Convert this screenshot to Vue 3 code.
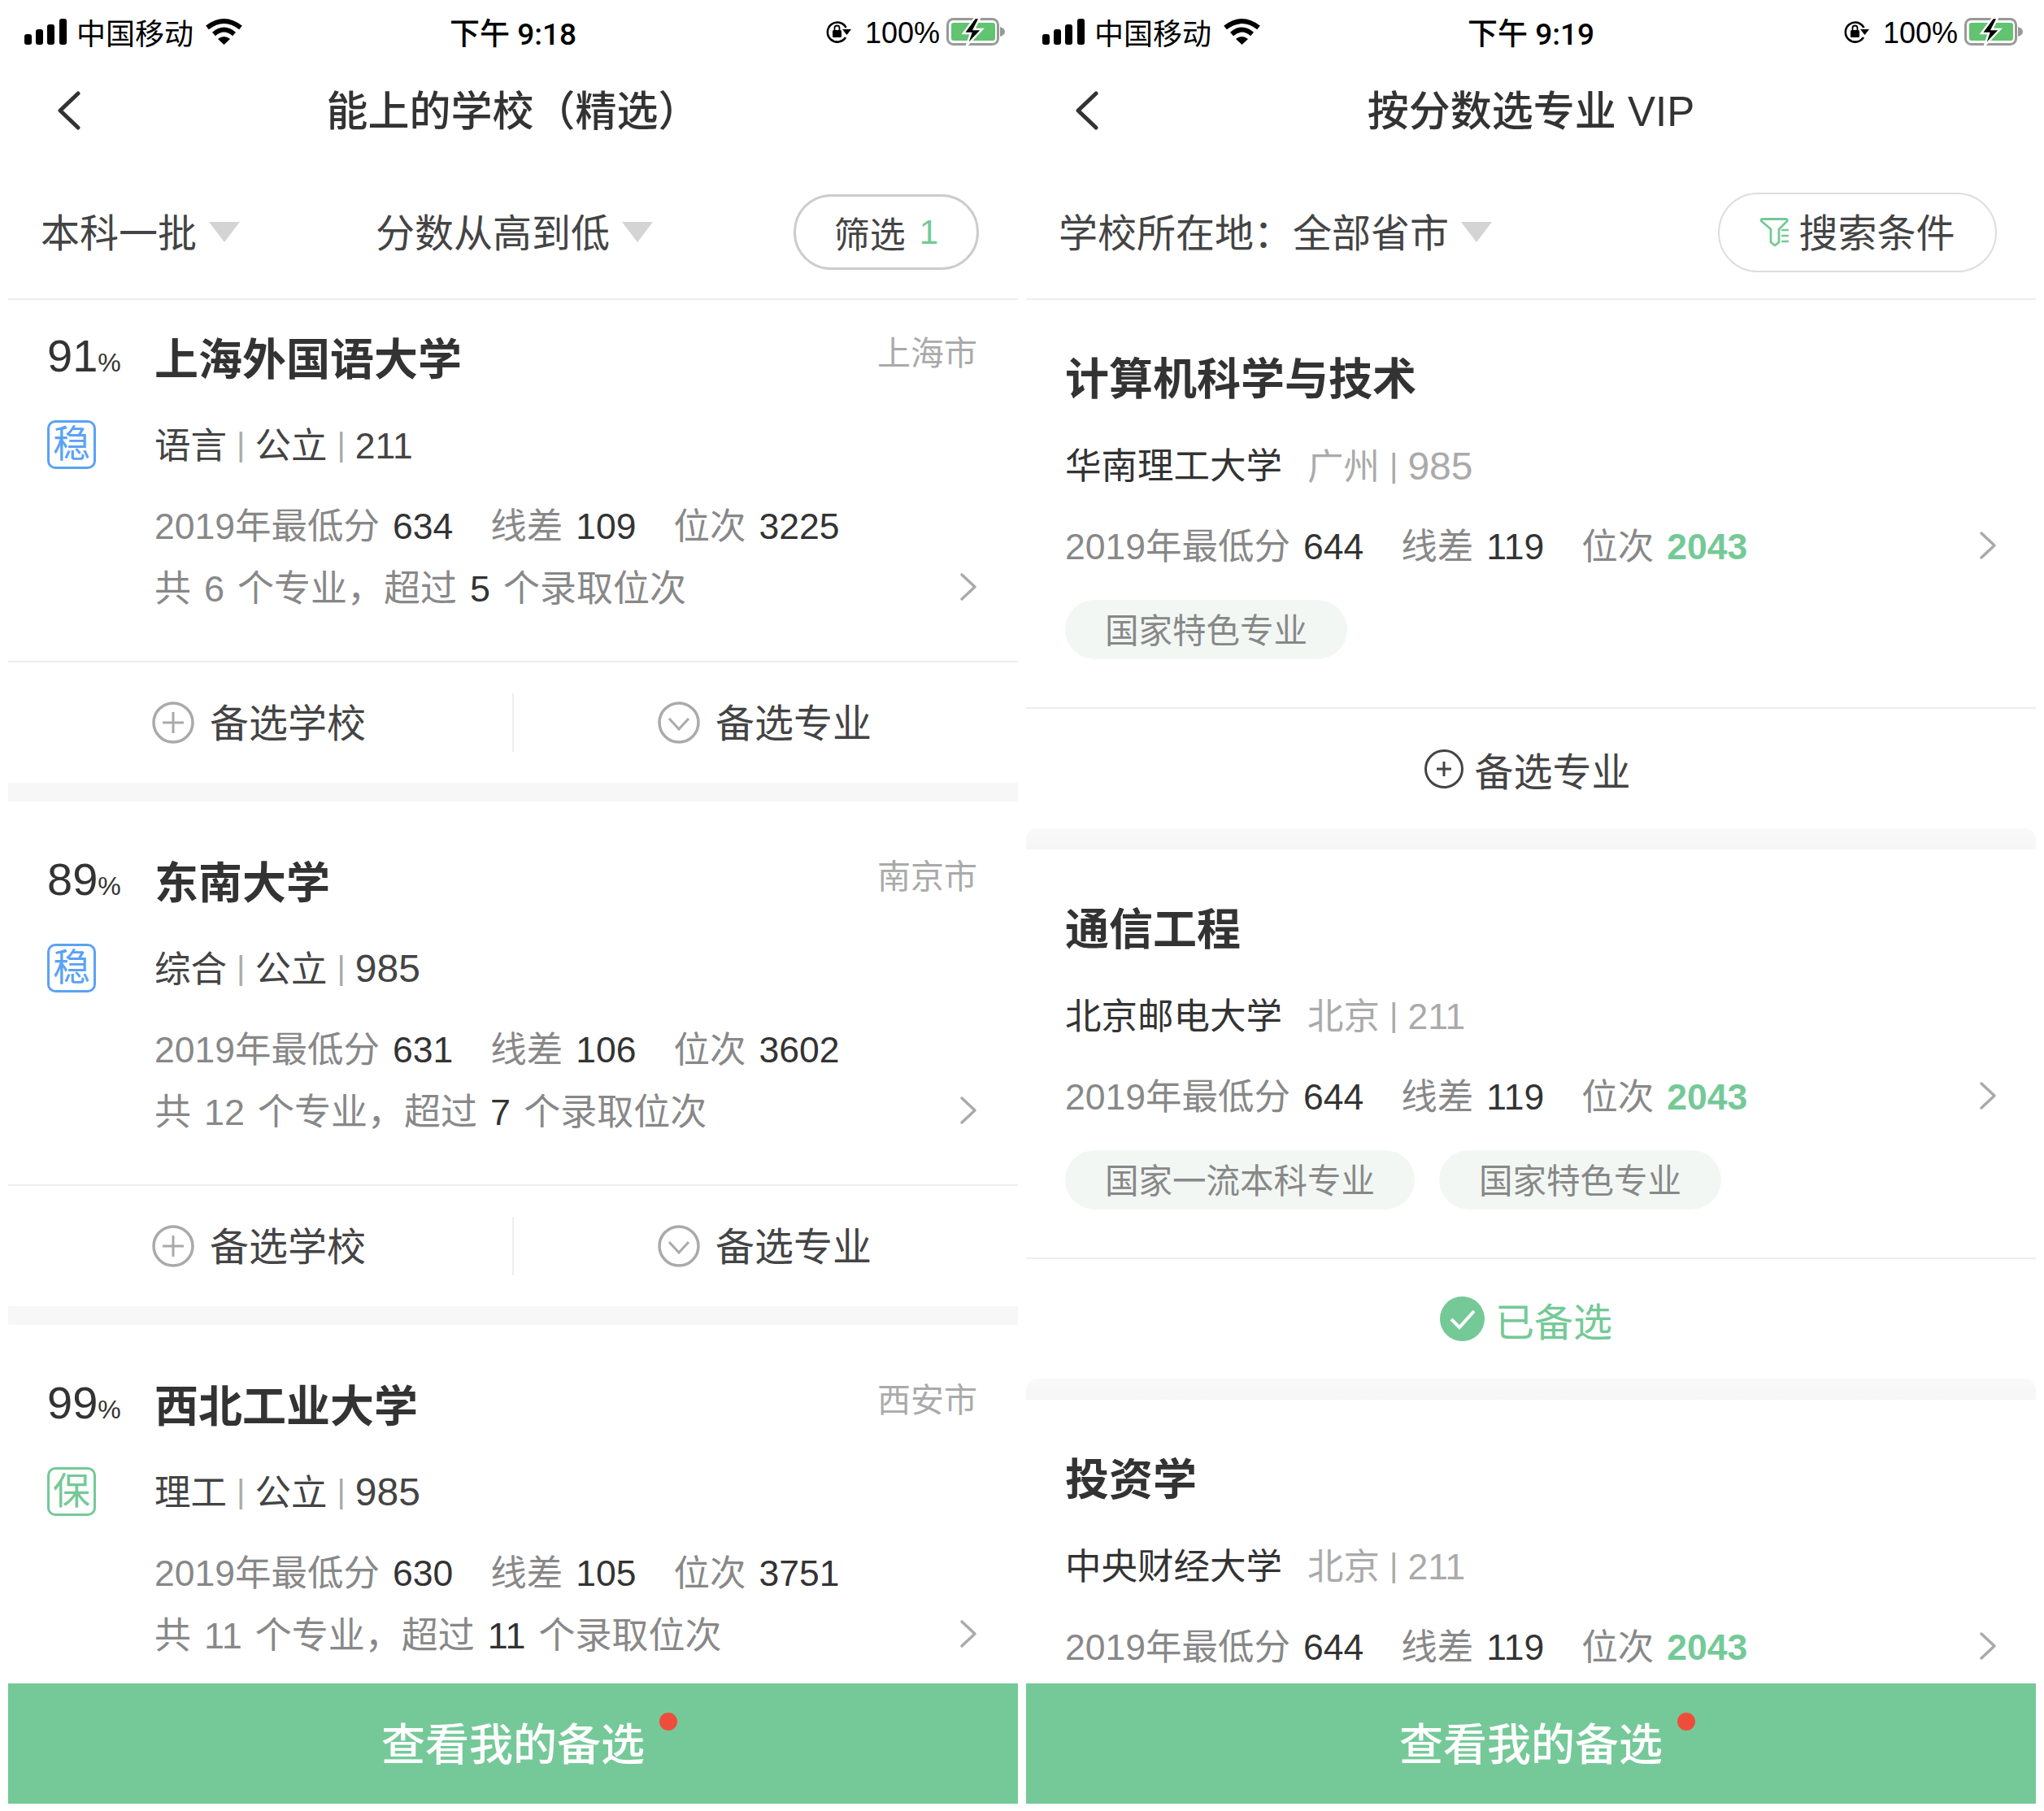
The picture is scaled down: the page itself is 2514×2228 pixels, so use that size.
<script setup>
const schools = [
  { pct: 91, name: '上海外国语大学', city: '上海市', risk: '稳', tone: 'blue', meta: ['语言', '公立', '211'], score: 634, diff: 109, rank: 3225, majors: 6, over: 5, cut: false },
  { pct: 89, name: '东南大学', city: '南京市', risk: '稳', tone: 'blue', meta: ['综合', '公立', '985'], score: 631, diff: 106, rank: 3602, majors: 12, over: 7, cut: false },
  { pct: 99, name: '西北工业大学', city: '西安市', risk: '保', tone: 'green', meta: ['理工', '公立', '985'], score: 630, diff: 105, rank: 3751, majors: 11, over: 11, cut: true }
]
const majors = [
  { name: '计算机科学与技术', school: '华南理工大学', city: '广州', level: '985', tags: ['国家特色专业'], picked: false, cut: false },
  { name: '通信工程', school: '北京邮电大学', city: '北京', level: '211', tags: ['国家一流本科专业', '国家特色专业'], picked: true, cut: false },
  { name: '投资学', school: '中央财经大学', city: '北京', level: '211', tags: [], picked: false, cut: true }
]
const phones = [{ time: '下午 9:18' }, { time: '下午 9:19' }]
</script>

<template>
  <div class="page">
    <section v-for="(phone, idx) in phones" :key="idx" class="phone">
      <header class="status">
        <div class="st-left">
          <svg class="signal" width="52" height="32" viewBox="0 0 52 32">
            <rect x="0" y="19" width="9" height="13" rx="3" />
            <rect x="14" y="13" width="9" height="19" rx="3" />
            <rect x="28" y="7" width="9" height="25" rx="3" />
            <rect x="43" y="0" width="9" height="32" rx="3" />
          </svg>
          <span class="carrier">中国移动</span>
          <svg class="wifi" width="45" height="33" viewBox="0 0 45 33">
            <path d="M2 12 Q22.5 -4 43 12" fill="none" stroke="#000" stroke-width="6" />
            <path d="M10 20 Q22.5 9 35 20" fill="none" stroke="#000" stroke-width="6" />
            <path d="M15 26 Q22.5 20 30 26 L22.5 33 Z" fill="#000" />
          </svg>
        </div>
        <div class="st-time">{{ phone.time }}</div>
        <div class="st-right">
          <svg width="32" height="28" viewBox="0 0 32 28">
            <path d="M25 21 A12 12 0 1 1 25.5 9" fill="none" stroke="#000" stroke-width="2.6" />
            <path d="M21 11 H32 L26.5 18 Z" fill="#000" />
            <rect x="9" y="12" width="11" height="9" rx="1.5" fill="#000" />
            <path d="M11.5 12 V9.5 A3 3 0 0 1 17.5 9.5 V12" fill="none" stroke="#000" stroke-width="1.8" />
          </svg>
          <span class="pct-st">100%</span>
          <svg width="74" height="34" viewBox="0 0 74 34">
            <rect x="1.5" y="1.5" width="62" height="31" rx="7" fill="none" stroke="#999" stroke-width="3" />
            <rect x="6" y="6" width="54" height="22" rx="3" fill="#62c370" />
            <path d="M66 11 Q72 13 72 17 Q72 21 66 23 Z" fill="#999" />
            <path d="M35 0 L21 19 H30 L25 34 L44 14 H34 L41 0 Z" fill="#000" stroke="#fff" stroke-width="2.5" />
          </svg>
        </div>
      </header>

      <nav class="nav">
        <svg class="back" width="32" height="48" viewBox="0 0 32 48">
          <path d="M28 3 L6 24 L28 45" fill="none" stroke="#333" stroke-width="5" stroke-linecap="round" stroke-linejoin="round" />
        </svg>
        <h1 class="nav-title">{{ idx === 0 ? '能上的学校（精选）' : '按分数选专业 VIP' }}</h1>
      </nav>

      <div v-if="idx === 0" class="filter">
        <div class="f-item f-first"><span class="lift">本科一批</span><i class="tri"></i></div>
        <div class="f-item"><span class="lift">分数从高到低</span><i class="tri"></i></div>
        <div class="pill pill-a">筛选<b>1</b></div>
      </div>
      <div v-else class="filter">
        <div class="f-item"><span class="lift">学校所在地：全部省市</span><i class="tri"></i></div>
        <div class="pill pill-b">
          <svg width="38" height="37" viewBox="0 0 38 37">
            <path d="M3 2.5 H33 Q35 3 34 5 L24 15 V31 L19 35 L14 31 V15 L2.5 5 Q1.5 3 3 2.5 Z" fill="none" stroke="#74c997" stroke-width="2.8" stroke-linejoin="round" />
            <path d="M27 16 H36 M27 23 H36 M27 30 H36" stroke="#74c997" stroke-width="2.6" />
          </svg>
          <span class="lift">搜索条件</span>
        </div>
      </div>

      <div v-if="idx === 0" class="list">
        <article v-for="s in schools" :key="s.name" class="school">
          <div class="s-body">
            <div class="s-head">
              <span class="percent">{{ s.pct }}<small>%</small></span>
              <span class="s-name">{{ s.name }}</span>
              <span class="s-city">{{ s.city }}</span>
            </div>
            <div class="s-meta">
              <span class="risk" :class="s.tone">{{ s.risk }}</span>
              <span class="meta-text">
                <template v-for="(m, i) in s.meta" :key="m"><i v-if="i" class="bar">|</i><span :class="{ wide: m === '985' }">{{ m }}</span></template>
              </span>
            </div>
            <div class="s-stats">
              <span>2019年最低分<em>{{ s.score }}</em></span>
              <span>线差<em>{{ s.diff }}</em></span>
              <span>位次<em>{{ s.rank }}</em></span>
            </div>
            <div class="s-sum">
              <span>共<i class="num">{{ s.majors }}</i>个专业，超过<em class="num">{{ s.over }}</em>个录取位次</span>
              <svg class="arrow" width="22" height="36" viewBox="0 0 22 36">
                <path d="M3 3 L19 18 L3 33" fill="none" stroke="#aaa" stroke-width="3.5" stroke-linecap="round" stroke-linejoin="round" />
              </svg>
            </div>
          </div>
          <div v-if="!s.cut" class="s-actions">
            <div class="act">
              <svg width="52" height="52" viewBox="0 0 52 52">
                <circle cx="26" cy="26" r="24" fill="none" stroke="#aaa" stroke-width="3.5" />
                <path d="M26 13 V39 M13 26 H39" stroke="#aaa" stroke-width="3" />
              </svg>
              <span class="lift">备选学校</span>
            </div>
            <i class="act-sep"></i>
            <div class="act">
              <svg width="52" height="52" viewBox="0 0 52 52">
                <circle cx="26" cy="26" r="24" fill="none" stroke="#aaa" stroke-width="3.5" />
                <path d="M14 21 L26 34 L38 21" fill="none" stroke="#aaa" stroke-width="3" />
              </svg>
              <span class="lift">备选专业</span>
            </div>
          </div>
        </article>
      </div>

      <div v-else class="list">
        <article v-for="m in majors" :key="m.name" class="major">
          <div class="m-body">
            <h2 class="m-name">{{ m.name }}</h2>
            <div class="m-school">
              <span>{{ m.school }}</span>
              <span class="m-loc">{{ m.city }}<i class="bar">|</i><span :class="{ wide: m.level === '985' }">{{ m.level }}</span></span>
            </div>
            <div class="m-stats">
              <span>2019年最低分<em>644</em></span>
              <span>线差<em>119</em></span>
              <span>位次<em class="hot">2043</em></span>
              <svg class="arrow" width="22" height="36" viewBox="0 0 22 36">
                <path d="M3 3 L19 18 L3 33" fill="none" stroke="#aaa" stroke-width="3.5" stroke-linecap="round" stroke-linejoin="round" />
              </svg>
            </div>
            <div v-if="!m.cut" class="m-tags">
              <span v-for="t in m.tags" :key="t" class="tag">{{ t }}</span>
            </div>
          </div>
          <div v-if="!m.cut" class="m-action" :class="{ picked: m.picked }">
            <svg v-if="m.picked" width="55" height="55" viewBox="0 0 55 55">
              <circle cx="27.5" cy="27.5" r="27.5" fill="#74c997" />
              <path d="M14 28 L24 38 L42 18" fill="none" stroke="#fff" stroke-width="4" />
            </svg>
            <svg v-else width="48" height="48" viewBox="0 0 48 48">
              <circle cx="24" cy="24" r="22.5" fill="none" stroke="#444" stroke-width="3" />
              <path d="M24 15 V33 M15 24 H33" stroke="#444" stroke-width="3" />
            </svg>
            {{ m.picked ? '已备选' : '备选专业' }}
          </div>
        </article>
      </div>

      <footer class="cta"><span class="cta-text">查看我的备选<i class="dot"></i></span></footer>
    </section>
  </div>
</template>

<style>
html, body { margin: 0; background: #fff; }
</style>

<style scoped>
.page {
  width: 2514px;
  height: 2228px;
  padding: 0 10px 9px;
  box-sizing: border-box;
  display: flex;
  gap: 10px;
  background: #fff;
  overflow: hidden;
  font-family: "Liberation Sans", "Noto Sans CJK SC", sans-serif;
  color: #333;
}
i, em { font-style: normal; }
.lift { padding-bottom: 6px; }
.phone {
  width: 1242px;
  height: 100%;
  display: flex;
  flex-direction: column;
}
.status {
  height: 80px;
  flex: none;
  box-sizing: border-box;
  display: grid;
  grid-template-columns: 1fr auto 1fr;
  align-items: center;
  color: #000;
  padding: 0 14px 2px 20px;
  font-size: 36px;
}
.st-left { display: flex; align-items: center; }
.carrier { margin-left: 12px; font-size: 36px; }
.wifi { margin-left: 15px; margin-top: -1px; }
.st-time { font-family: Roboto, "Noto Sans CJK SC", sans-serif; font-weight: 500; font-size: 37px; margin-left: -6px; }
.st-right { display: flex; align-items: center; justify-content: flex-end; }
.pct-st { margin: 3px 8px 0 17px; }
.nav {
  height: 112px;
  flex: none;
  box-sizing: border-box;
  padding-bottom: 6px;
  position: relative;
  display: flex;
  align-items: center;
  justify-content: center;
}
.back { position: absolute; left: 58px; top: 32px; }
.nav-title { margin: 0; font-size: 51px; font-weight: 500; color: #333; }
.filter {
  height: 177px;
  flex: none;
  box-sizing: border-box;
  padding: 12px 0 0 40px;
  display: flex;
  align-items: center;
  font-size: 48px;
  color: #444;
  border-bottom: 2px solid #eee;
}
.f-item { display: flex; align-items: center; }
.f-first { width: 412px; }
.tri {
  width: 0;
  height: 0;
  margin-left: 15px;
  border-left: 19px solid transparent;
  border-right: 19px solid transparent;
  border-top: 25px solid #d4d4d4;
}
.pill {
  margin-left: auto;
  display: flex;
  align-items: center;
  justify-content: center;
  box-sizing: border-box;
  background: #fff;
  color: #444;
}
.pill-a {
  width: 228px;
  height: 93px;
  margin-right: 48px;
  border: 3px solid #ccc;
  border-radius: 46px;
  font-size: 44px;
}
.pill-a b { color: #74c997; font-weight: 400; margin-left: 17px; font-size: 42px; }
.pill-b {
  width: 343px;
  height: 98px;
  margin-right: 48px;
  border: 2px solid #ddd;
  border-radius: 49px;
  gap: 10px;
  font-size: 48px;
}
.list { flex: 1; min-height: 0; overflow: hidden; }
.school { border-bottom: 23px solid #f7f7f7; }
.school:last-child { border-bottom: 0; }
.s-body {
  padding: 61px 50px 58px 48px;
  border-bottom: 2px solid #eee;
}
.school:first-child .s-body { padding-top: 34px; }
.s-head { display: flex; align-items: center; height: 70px; }
.percent { width: 132px; flex: none; font-size: 56px; color: #333; margin-top: -2px; }
.percent small { font-size: 32px; }
.s-name { font-size: 54px; font-weight: 600; color: #333; }
.s-city { margin-left: auto; font-size: 41px; color: #aaa; margin-top: -14px; }
.s-meta { display: flex; align-items: center; height: 72px; margin-top: 35px; }
.risk {
  width: 60px;
  height: 60px;
  flex: none;
  margin-top: 6px;
  margin-right: 72px;
  box-sizing: border-box;
  border: 3px solid;
  border-radius: 10px;
  font-size: 46px;
  line-height: 52px;
  text-align: center;
}
.blue { color: #5aa2f6; }
.green { color: #74c997; }
.meta-text { font-size: 44.5px; color: #444; }
.bar { margin: 0 12px; color: #aaa; font-size: 40px; position: relative; top: -3px; }
.wide { font-size: 48px; }
.s-stats, .s-sum {
  display: flex;
  align-items: center;
  height: 60px;
  padding-left: 132px;
  font-size: 44.5px;
  line-height: 1.2;
  color: #888;
}
.s-stats { margin-top: 38px; gap: 46px; }
.s-stats em, .m-stats em { margin-left: 16px; color: #333; }
.s-sum { margin-top: 17px; justify-content: space-between; font-size: 45px; }
.s-sum .arrow { margin-top: -6px; }
.num { margin: 0 16px; }
.s-sum em { color: #333; }
.s-actions { height: 148px; display: flex; align-items: center; }
.act {
  flex: 1;
  display: flex;
  align-items: center;
  justify-content: center;
  gap: 19px;
  padding-right: 3px;
  font-size: 48px;
  color: #444;
}
.act-sep { width: 2px; height: 72px; background: #eee; flex: none; }
.major::after {
  content: "";
  display: block;
  height: 26px;
  border-radius: 14px 14px 0 0;
  background: linear-gradient(#f9f9f9, #f6f6f6);
}
.major:last-child::after { display: none; }
.m-body { padding: 64px 48px 59px 48px; border-bottom: 2px solid #eee; }
.major:first-child .m-body { padding-top: 63px; }
.m-name { margin: 0; height: 70px; line-height: 70px; font-size: 54px; font-weight: 600; color: #333; }
.m-school { height: 60px; margin-top: 42px; display: flex; align-items: center; gap: 31px; font-size: 44.5px; line-height: 1.2; color: #333; }
.m-loc { color: #aaa; }
.m-stats { height: 60px; margin-top: 39px; display: flex; align-items: center; gap: 46px; font-size: 44.5px; line-height: 1.2; color: #888; }
.m-stats .arrow { margin-left: auto; margin-top: -4px; }
.m-stats em.hot { color: #74c997; font-weight: 700; }
.m-tags { display: flex; gap: 30px; margin-top: 35px; }
.tag {
  height: 73px;
  box-sizing: border-box;
  padding: 4px 49px 0;
  display: flex;
  align-items: center;
  border-radius: 37px;
  background: #f2f7f4;
  font-size: 41.5px;
  line-height: 1.2;
  color: #888;
}
.m-action {
  height: 147px;
  display: flex;
  align-items: center;
  justify-content: center;
  gap: 13px;
  padding-right: 8px;
  font-size: 48px;
  color: #444;
}
.m-action.picked { color: #74c997; padding-right: 12px; }
.cta {
  height: 148px;
  flex: none;
  box-sizing: border-box;
  padding-bottom: 6px;
  background: #75c998;
  display: flex;
  align-items: center;
  justify-content: center;
  color: #fff;
  font-size: 54px;
  font-weight: 500;
}
.cta-text { position: relative; }
.dot {
  position: absolute;
  left: calc(100% + 18px);
  top: 4px;
  width: 22px;
  height: 22px;
  border-radius: 50%;
  background: #ee4d3c;
}
</style>
